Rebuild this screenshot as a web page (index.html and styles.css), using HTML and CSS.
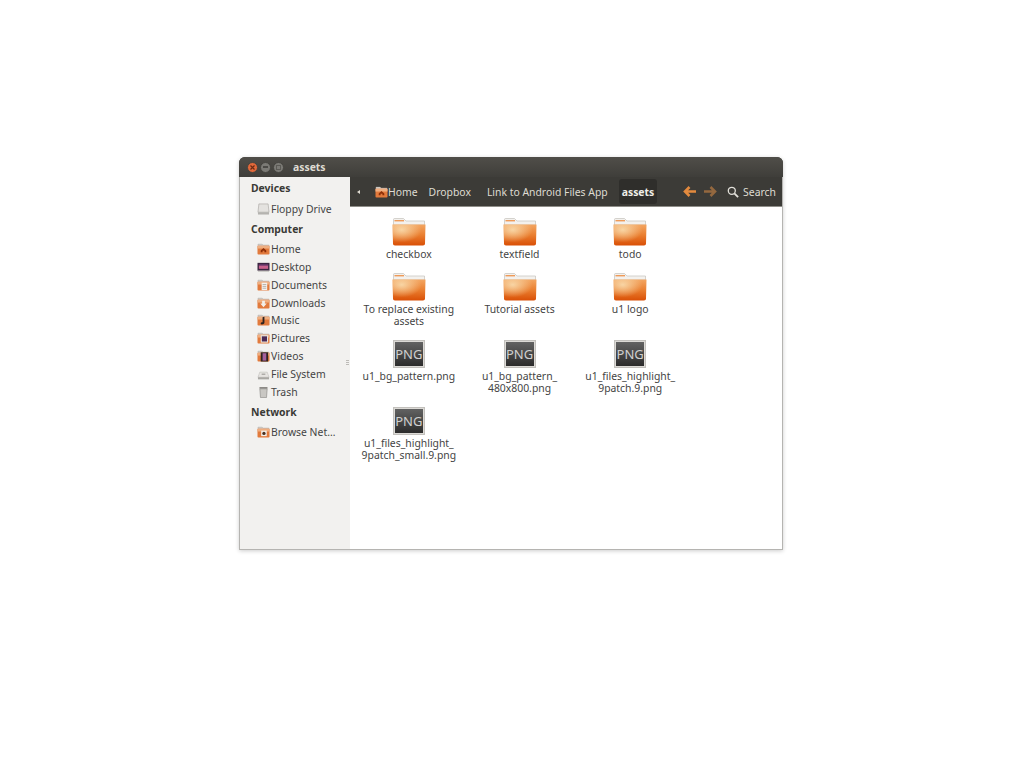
FILE: index.html
```html
<!DOCTYPE html>
<html lang="en">
<head>
  <meta charset="UTF-8" />
  <title>assets</title>
  <link rel="stylesheet" href="styles.css">
</head>
<body>
  <svg class="defs" width="0" height="0">
    <defs>
      <linearGradient id="fbody" x1="0" y1="0" x2="0" y2="1">
        <stop offset="0" stop-color="#f3a662"/>
        <stop offset="0.5" stop-color="#ea7f30"/>
        <stop offset="1" stop-color="#d94f06"/>
      </linearGradient>
      <radialGradient id="fglow" cx="0.28" cy="0.25" r="0.6">
        <stop offset="0" stop-color="#f9dcae" stop-opacity="0.9"/>
        <stop offset="1" stop-color="#f9dcae" stop-opacity="0"/>
      </radialGradient>
      <symbol id="folder" viewBox="0 0 34 28">
        <path d="M1.500 7V1.500C1.500 .8 2 .5 2.500 .5H11.500L14 3H32.500V7Z" fill="#f3f1ee" stroke="#c4c1bc" stroke-width=".7"/>
        <rect x="2.500" y="2" width="9.500" height="1.400" fill="#ee9a58"/>
        <path d="M.5 6.500H33.500L33 25.500C33 26.700 32.300 27.500 31 27.500H3C1.700 27.500 1 26.700 1 25.500Z" fill="url(#fbody)"/>
        <path d="M.5 6.500H33.500L33 25.500C33 26.700 32.300 27.500 31 27.500H3C1.700 27.500 1 26.700 1 25.500Z" fill="url(#fglow)"/>
      </symbol>
      <symbol id="placefolder" viewBox="0 0 14 13">
        <path d="M1 4V1.200H5.500L6.500 2.200H13V4Z" fill="#d3d0cb" stroke="#a8a5a0" stroke-width=".4"/>
        <rect x=".5" y="3" width="13" height="9.500" rx="1" fill="#e27a3c"/>
        <rect x=".5" y="3" width="13" height="3" fill="#efae80"/>
      </symbol>
    </defs>
  </svg>

  <div class="window">
    <div class="titlebar">
      <div class="winbtns">
        <span class="winbtn close">
          <svg width="7" height="7" viewBox="0 0 7 7"><path d="M1.500 1.500L5.500 5.500M5.500 1.500L1.500 5.500" stroke="#6b2c14" stroke-width="1.200"/></svg>
        </span>
        <span class="winbtn"><span class="dash"></span></span>
        <span class="winbtn"><span class="sq"></span></span>
      </div>
      <span class="wintitle">assets</span>
    </div>

    <div class="winbody">
      <aside class="sidebar">
        <h2 class="side-head first">Devices</h2>
        <div class="side-row">
          <svg class="side-icon" viewBox="0 0 14 13"><path d="M2 1H12L13 10H1Z" fill="#e4e2df" stroke="#a9a7a3" stroke-width=".7"/><rect x="1" y="10" width="12" height="2.500" fill="#b5b3af"/></svg>
          Floppy Drive
        </div>

        <h2 class="side-head">Computer</h2>
        <div class="side-row">
          <svg class="side-icon" viewBox="0 0 14 13"><use href="#placefolder"/><path d="M4 10V8L7 5.500L10 8V10H8V8.500H6V10Z" fill="#8d2f08"/></svg>
          Home
        </div>
        <div class="side-row">
          <svg class="side-icon" viewBox="0 0 14 13"><rect x=".5" y="2" width="13" height="8.500" fill="#3a2540"/><rect x="2" y="4.500" width="10" height="4" fill="#c8608c"/><rect x="2" y="3.500" width="10" height="1.500" fill="#6a3a6e"/><rect x="1" y="10.500" width="12" height="1" fill="#b9b6b2"/></svg>
          Desktop
        </div>
        <div class="side-row">
          <svg class="side-icon" viewBox="0 0 14 13"><use href="#placefolder"/><rect x="5" y="4" width="6" height="8" fill="#f4f2ee"/><path d="M6 6H10M6 8H10M6 10H10" stroke="#9a8f85" stroke-width=".7"/></svg>
          Documents
        </div>
        <div class="side-row">
          <svg class="side-icon" viewBox="0 0 14 13"><use href="#placefolder"/><path d="M5.500 4H8.500V7H10.500L7 11L3.500 7H5.500Z" fill="#f2efe9"/></svg>
          Downloads
        </div>
        <div class="side-row">
          <svg class="side-icon" viewBox="0 0 14 13"><use href="#placefolder"/><path d="M6 3.500L8 3V9.500C8 11 4.500 12 4 10.500C3.700 9.300 5 8.700 6 9Z" fill="#2e2320"/></svg>
          Music
        </div>
        <div class="side-row">
          <svg class="side-icon" viewBox="0 0 14 13"><use href="#placefolder"/><rect x="4" y="3.500" width="8" height="8" fill="#e8e5df"/><rect x="5.200" y="4.700" width="5.600" height="5.600" fill="#4b2a55"/></svg>
          Pictures
        </div>
        <div class="side-row">
          <svg class="side-icon" viewBox="0 0 14 13"><use href="#placefolder"/><rect x="4" y="2.500" width="8" height="10" fill="#2e2320"/><rect x="6" y="3.500" width="4" height="8" fill="#a4609c"/></svg>
          Videos
        </div>
        <div class="side-row">
          <svg class="side-icon" viewBox="0 0 14 13"><path d="M3 4.500H11L13 10H1Z" fill="#e6e4e1" stroke="#b3b1ad" stroke-width=".5"/><rect x="1" y="10" width="12" height="2.300" fill="#a9a7a3"/><rect x="5" y="6" width="4" height="1.500" fill="#aaa8a4"/></svg>
          File System
        </div>
        <div class="side-row">
          <svg class="side-icon" viewBox="0 0 14 13"><path d="M3 3H11L10.300 12.500H3.700Z" fill="#c9c7c3" stroke="#7e7c78" stroke-width=".6"/><rect x="2.500" y="1" width="9" height="2" rx=".8" fill="#8c8a86"/></svg>
          Trash
        </div>

        <h2 class="side-head">Network</h2>
        <div class="side-row">
          <svg class="side-icon" viewBox="0 0 14 13"><use href="#placefolder"/><rect x="4.500" y="5" width="6" height="6" fill="#f2efe9"/><circle cx="7.500" cy="8" r="1.800" fill="#4a3020"/></svg>
          Browse Net…
        </div>
        <div class="grip"></div>
      </aside>

      <main class="main">
        <div class="toolbar">
          <span class="crumb-back"></span>
          <span class="crumb crumb-home">
            <svg class="crumb-icon" viewBox="0 0 14 13"><use href="#placefolder"/><path d="M4 10V8L7 5.500L10 8V10H8V8.500H6V10Z" fill="#8d2f08"/></svg>
            Home
          </span>
          <span class="crumb crumb-dropbox">Dropbox</span>
          <span class="crumb crumb-link">Link to Android Files App</span>
          <span class="crumb-current">assets</span>
          <div class="tools">
            <svg class="arrow" viewBox="0 0 13 11"><path d="M6.500 1L2 5.500L6.500 10M3 5.500H13" fill="none" stroke="#e38a3e" stroke-width="2.600"/></svg>
            <svg class="arrow arrow-next" viewBox="0 0 13 11"><path d="M6.500 1L11 5.500L6.500 10M10 5.500H0" fill="none" stroke="#94683f" stroke-width="2.600"/></svg>
            <svg class="lens" viewBox="0 0 13 13"><circle cx="5.200" cy="5.200" r="3.800" fill="none" stroke="#e2e0da" stroke-width="1.400"/><path d="M8 8L12 12" stroke="#e2e0da" stroke-width="2"/></svg>
            <span class="search-label">Search</span>
          </div>
        </div>

        <div class="files">
          <div class="file"><svg class="file-icon"><use href="#folder"/></svg><span>checkbox</span></div>
          <div class="file"><svg class="file-icon"><use href="#folder"/></svg><span>textfield</span></div>
          <div class="file"><svg class="file-icon"><use href="#folder"/></svg><span>todo</span></div>

          <div class="file"><svg class="file-icon"><use href="#folder"/></svg><span>To replace existing<br>assets</span></div>
          <div class="file"><svg class="file-icon"><use href="#folder"/></svg><span>Tutorial assets</span></div>
          <div class="file"><svg class="file-icon"><use href="#folder"/></svg><span>u1 logo</span></div>

          <div class="file"><div class="png"><b>PNG</b></div><span>u1_bg_pattern.png</span></div>
          <div class="file"><div class="png"><b>PNG</b></div><span>u1_bg_pattern_<br>480x800.png</span></div>
          <div class="file"><div class="png"><b>PNG</b></div><span>u1_files_highlight_<br>9patch.9.png</span></div>

          <div class="file"><div class="png"><b>PNG</b></div><span>u1_files_highlight_<br>9patch_small.9.png</span></div>
        </div>
      </main>
    </div>
  </div>
</body>
</html>
```

FILE: styles.css
```css
html, body { margin: 0; height: 100%; background: #fff; overflow: hidden; }
body { font-family: "Noto Sans", sans-serif; font-size: 10.4px; color: #444; }
.defs { position: absolute; }

.window { width: 544px; height: 393px; margin: 157px 0 0 239px; display: flex; flex-direction: column;
  border-radius: 6px 6px 0 0; box-shadow: 0 1px 4px rgba(0,0,0,0.2); background: #3c3b37; }

.titlebar { height: 20px; flex: none; display: flex; align-items: center; padding-left: 8px;
  border-radius: 6px 6px 0 0; background: linear-gradient(#504e49, #3f3e3a); }
.winbtns { display: flex; gap: 2px; }
.winbtn { width: 11px; height: 11px; border-radius: 50%; background: #7b7a75; display: flex; box-sizing: border-box;
  align-items: center; justify-content: center; border: 1px solid #45443f; }
.winbtn.close { background: #e2683a; }
.dash { width: 5px; height: 2px; background: #4b4a46; }
.sq { width: 3px; height: 3px; border: 1px solid #5b5a55; }
.wintitle { margin-left: 9px; color: #dfdbd2; font-weight: 700; }

.winbody { flex: 1; display: flex; min-height: 0; padding: 0 1px 1px; background: #b5b4b1; }

.sidebar { width: 110px; flex: none; background: #f2f1ef; position: relative; padding-left: 11px;
  box-sizing: border-box; }
.side-head { margin: 0; height: 22px; line-height: 22px; font-size: 10.4px; font-weight: 700; color: #3a3a36; }
.side-head.first { height: 23px; }
.side-row { height: 17.9px; line-height: 18px; display: flex; align-items: center; padding-left: 6px; gap: 1px; white-space: nowrap; }
.side-icon { width: 13px; height: 12px; flex: none; }
.grip { position: absolute; right: 1px; top: 183px; width: 3px; height: 5px;
  background: repeating-linear-gradient(#bdbbb7 0 1px, transparent 1px 2px); }

.main { flex: 1; min-width: 0; display: flex; flex-direction: column; background: #fff; }

.toolbar { height: 30px; flex: none; display: flex; align-items: center; color: #dfdbd2;
  background: #3c3b37; border-bottom: 1px solid #8f8e89; box-sizing: border-box; }
.crumb-back { width: 0; height: 0; margin-left: 7px; border: 2.500px solid transparent; border-left: 0;
  border-right: 3px solid #dfdbd2; }
.crumb { white-space: nowrap; }
.crumb-home { margin-left: 15px; display: flex; align-items: center; }
.crumb-icon { width: 13px; height: 12px; }
.crumb-dropbox { margin-left: 11px; }
.crumb-link { margin-left: 16px; }
.crumb-current { margin-left: 11px; padding: 0 3px; height: 25px; line-height: 26px; font-weight: 700;
  color: #f0eee8; background: #2f2e2b; border-radius: 3px; }
.tools { margin-left: auto; display: flex; align-items: center; padding-right: 6px; }
.arrow { width: 13px; height: 11px; margin-right: 8px; }
.arrow-next { margin-right: 10px; }
.lens { width: 12px; height: 12px; margin-right: 4px; }

.files { flex: 1; display: grid; grid-template-columns: repeat(3, 110.700px); justify-content: start;
  align-content: start; padding: 11px 3.500px 0; text-align: center; }
.file { display: flex; flex-direction: column; align-items: center; margin-bottom: 13px; line-height: 12px; }
.file span { white-space: nowrap; }
.file-icon { width: 34px; height: 28px; margin-bottom: 2px; }
.png { width: 32px; height: 28px; box-sizing: border-box; margin-bottom: 2px; border: 2px solid #dcdad6;
  outline: 1px solid #c2c0bc; outline-offset: -1px; background: linear-gradient(#626262, #2c2c2c);
  display: flex; align-items: center; justify-content: center; }
.png b { font-weight: 400; font-size: 13px; color: #d0d0d0; line-height: 1; }
```
